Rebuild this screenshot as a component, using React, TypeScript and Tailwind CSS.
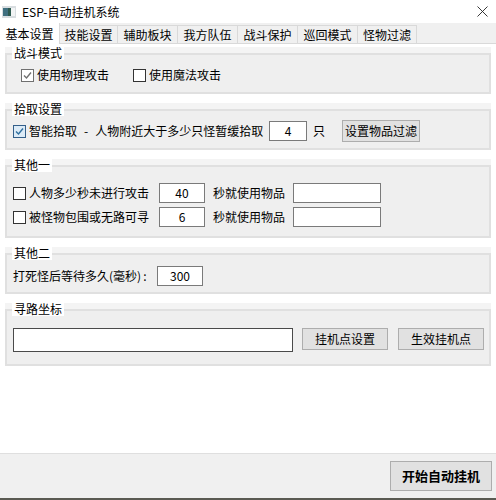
import React from "react";

const font = '"Noto Sans CJK SC", "Liberation Sans", sans-serif';

function Group({ title, className, children }: { title: string; className: string; children: React.ReactNode }) {
  return (
    <div className={`relative mx-[5px] bg-[#f4f4f4] pt-[6px] ${className}`}>
      <div className="absolute left-[7px] top-0 z-10 h-[13px] bg-white px-[2px] text-[12px] leading-[12px] text-black">{title}</div>
      <div className="h-full border-2 border-[#e0e0e0] bg-[#efefef]">{children}</div>
    </div>
  );
}

function Check({ checked, blue }: { checked?: boolean; blue?: boolean }) {
  return (
    <span className={`mr-[3px] flex h-[13px] w-[13px] shrink-0 items-center justify-center border ${blue ? "border-[#335f8a] bg-[#dcebf7]" : checked ? "border-[#707070] bg-white" : "border-[#333333] bg-white"}`}>
      {checked && (
        <svg width="11" height="11" viewBox="0 0 11 11" fill="none">
          <path d="M2 5.5 L4.5 8 L9 2.5" stroke={blue ? "#2f6f9f" : "#707070"} strokeWidth="1.4" />
        </svg>
      )}
    </span>
  );
}

function Input({ w, value }: { w: string; value?: string }) {
  return (
    <div className={`flex h-[20px] items-center justify-center border border-[#7a7a7a] bg-white text-[12px] leading-none text-black ${w}`}>
      {value}
    </div>
  );
}

function Button({ className, children }: { className: string; children: React.ReactNode }) {
  return (
    <div className={`flex items-center justify-center border border-[#adadad] bg-[#e1e1e1] text-black ${className}`}>
      {children}
    </div>
  );
}

const tabs = [
  ["技能设置", "w-[58px]"],
  ["辅助板块", "w-[60px]"],
  ["我方队伍", "w-[60px]"],
  ["战斗保护", "w-[60px]"],
  ["巡回模式", "w-[60px]"],
  ["怪物过滤", "w-[59px]"],
];

export default function App() {
  return (
    <div className="flex h-[500px] w-[496px] flex-col overflow-hidden bg-white text-[12px] text-black" style={{ fontFamily: font }}>
      <div className="flex h-[23px] shrink-0 items-center bg-white pl-[2px]">
        <svg width="14" height="12" viewBox="0 0 14 12" className="mr-[6px]">
          <rect x="0" y="0" width="14" height="12" fill="#d8dde0" />
          <rect x="1" y="2" width="5" height="8" fill="#3f6f7f" />
          <rect x="6" y="2" width="3" height="8" fill="#2e5a4f" />
          <rect x="9" y="2" width="4" height="8" fill="#f2f4f5" />
        </svg>
        <span className="text-[12px] leading-none">ESP-自动挂机系统</span>
        <svg width="11" height="11" viewBox="0 0 11 11" className="ml-auto mr-[8px]">
          <path d="M0.5 0.5 L10.5 10.5 M10.5 0.5 L0.5 10.5" stroke="#222222" strokeWidth="0.9" fill="none" />
        </svg>
      </div>

      <div className="flex h-[21px] shrink-0 items-end border-b border-[#d9d9d9] bg-[#f0f0f0]">
        <div className="z-10 mb-[-1px] flex h-[21px] w-[60px] items-center justify-center border-r border-[#d9d9d9] bg-white">基本设置</div>
        {tabs.map(([t, w]) => (
          <div key={t} className={`flex h-[18px] items-center justify-center border-r border-t border-[#d9d9d9] ${w}`}>
            {t}
          </div>
        ))}
      </div>

      <div className="flex flex-1 flex-col gap-[9px] pt-[3px]">
        <Group title="战斗模式" className="h-[47px]">
          <div className="flex items-center pl-[14px] pt-[13px]">
            <Check checked />
            <span className="w-[96px] leading-[14px]">使用物理攻击</span>
            <Check />
            <span className="leading-[14px]">使用魔法攻击</span>
          </div>
        </Group>

        <Group title="拾取设置" className="h-[47px]">
          <div className="flex items-center pl-[6px] pt-[9px]">
            <Check checked blue />
            <span className="w-[240px] leading-[14px]">智能拾取<span className="mx-[7px]">-</span>人物附近大于多少只怪暂缓拾取</span>
            <Input w="w-[38px]" value="4" />
            <span className="ml-[6px] w-[29px]">只</span>
            <Button className="h-[22px] w-[78px]">设置物品过滤</Button>
          </div>
        </Group>

        <Group title="其他一" className="h-[79px]">
          <div className="flex flex-col gap-[4px] pl-[6px] pt-[16px]">
            <div className="flex items-center">
              <Check />
              <span className="w-[130px] leading-[14px]">人物多少秒未进行攻击</span>
              <Input w="w-[46px]" value="40" />
              <span className="ml-[8px] w-[80px]">秒就使用物品</span>
              <Input w="w-[88px]" />
            </div>
            <div className="flex items-center">
              <Check />
              <span className="w-[130px] leading-[14px]">被怪物包围或无路可寻</span>
              <Input w="w-[46px]" value="6" />
              <span className="ml-[8px] w-[80px]">秒就使用物品</span>
              <Input w="w-[88px]" />
            </div>
          </div>
        </Group>

        <Group title="其他二" className="h-[47px]">
          <div className="flex items-center pl-[6px] pt-[11px]">
            <span className="w-[144px]">打死怪后等待多久(毫秒)<span className="ml-[2px]">:</span></span>
            <Input w="w-[46px]" value="300" />
          </div>
        </Group>

        <Group title="寻路坐标" className="h-[63px]">
          <div className="flex items-start pl-[6px] pt-[17px]">
            <div className="h-[24px] w-[280px] border border-[#4a4a4a] bg-white" />
            <Button className="ml-[9px] h-[22px] w-[86px]">挂机点设置</Button>
            <Button className="ml-[10px] h-[22px] w-[86px]">生效挂机点</Button>
          </div>
        </Group>
      </div>

      <div className="flex h-[45px] shrink-0 items-center justify-end border-t border-[#dfdfdf] bg-[#f0f0f0] pr-[4px]">
        <Button className="h-[30px] w-[102px] text-[13px] font-bold">开始自动挂机</Button>
      </div>
      <div className="h-[2px] shrink-0 bg-[#5a5a52]" />
    </div>
  );
}
